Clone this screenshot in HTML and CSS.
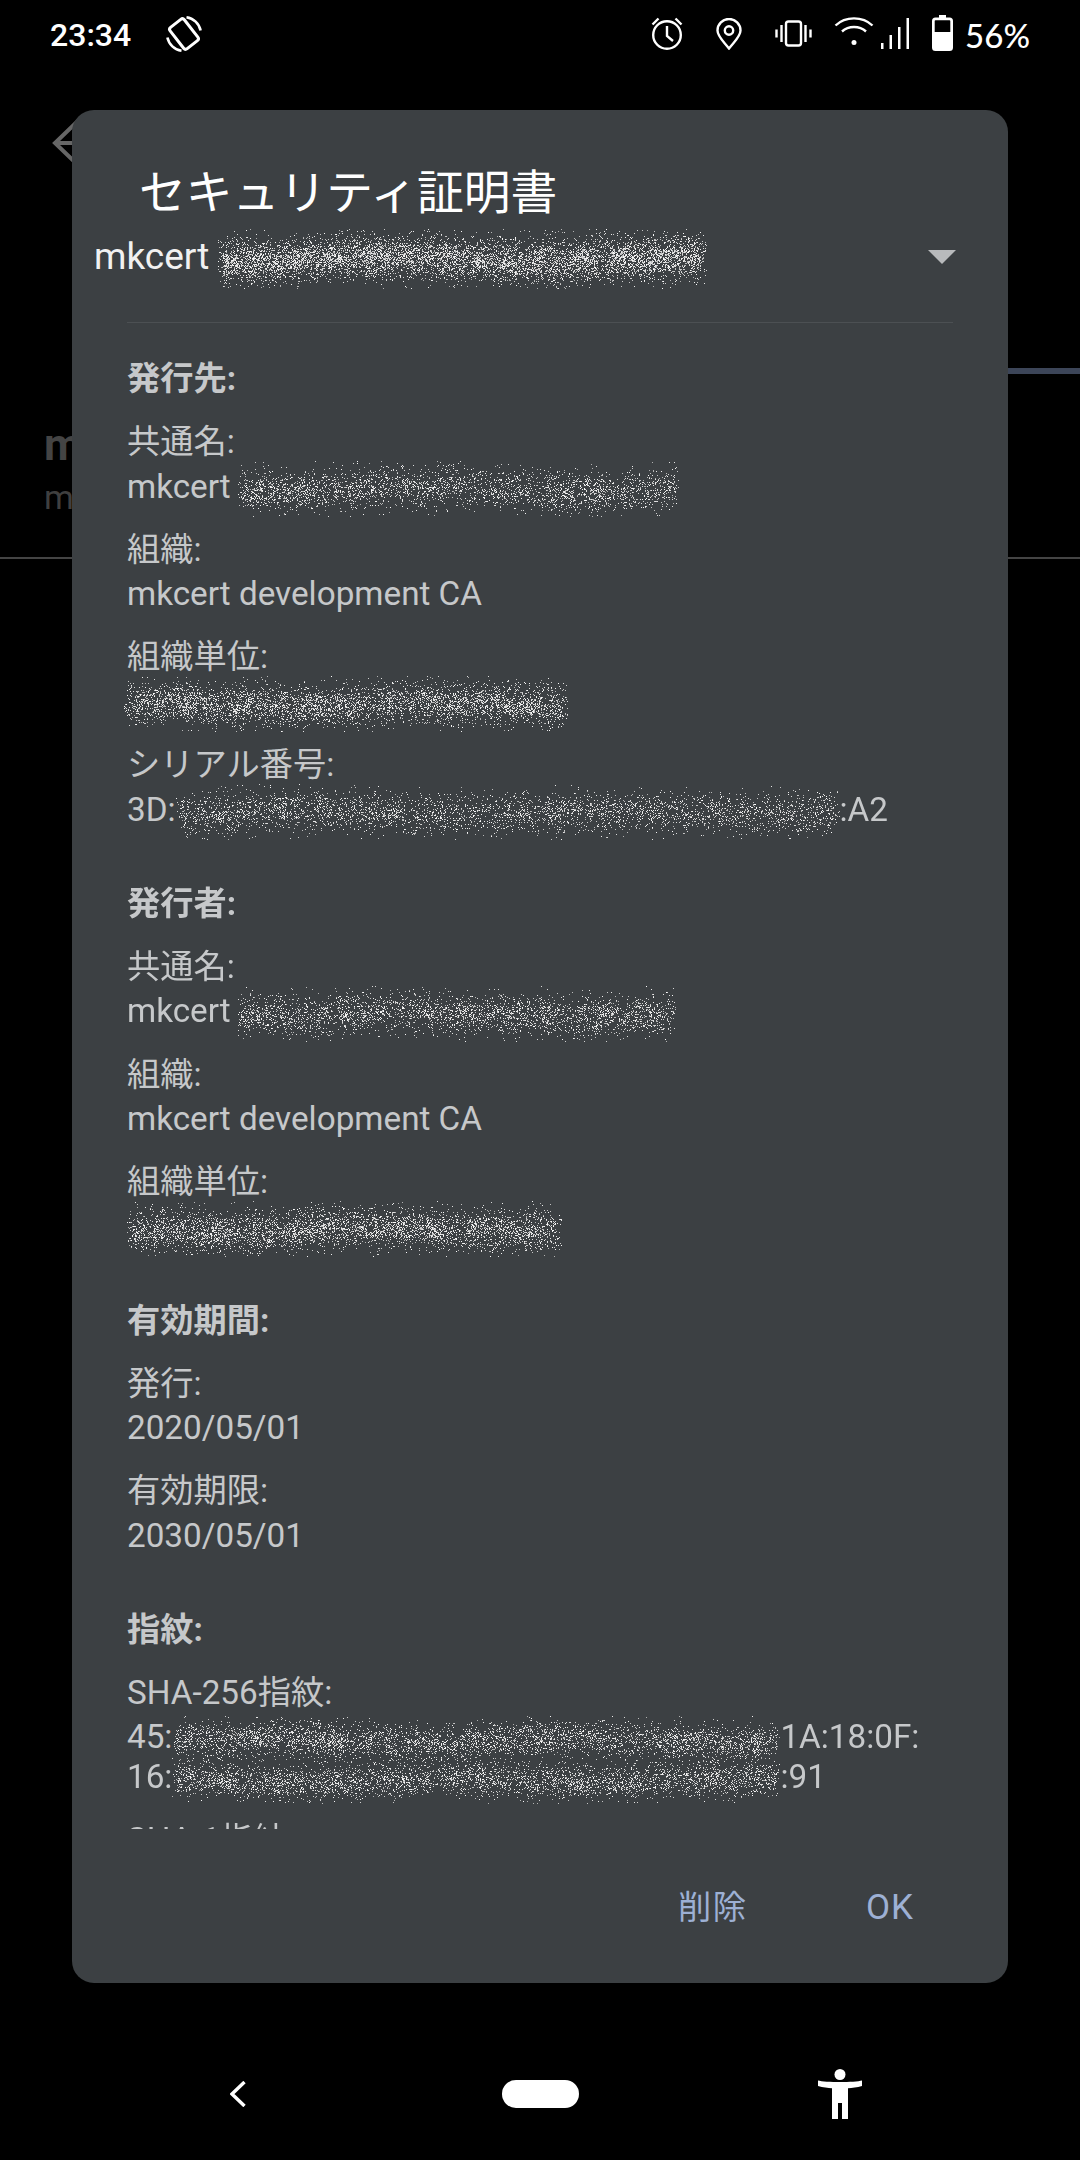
FILE: index.html
```html
<!DOCTYPE html>
<html lang="ja">
<head>
<meta charset="utf-8">
<title>セキュリティ証明書</title>
<link rel="stylesheet" href="styles.css">
</head>
<body>
<div class="screen">
  <header class="status">
    <span class="time">23:34</span>
    <svg class="ic-rotate" width="38" height="38" viewBox="0 0 38 38" fill="none" stroke="#fff" stroke-width="2.6">
      <rect x="10" y="5.5" width="18" height="27" rx="2.5" transform="rotate(-38 19 19)" stroke-width="3"/>
      <path d="M21.5 2.2A17 17 0 0 1 35.6 15.5M16.5 35.8A17 17 0 0 1 2.4 22.5"/>
    </svg>
    <span class="status-spacer"></span>
    <svg class="ic-alarm" width="32" height="34" viewBox="0 0 32 34" fill="none" stroke="#fff" stroke-width="2.4">
      <circle cx="16" cy="19" r="13.8"/>
      <path d="M16 10v10l6 5M1.5 8.5 7.500 2.500M30.500 8.500 24.500 2.500"/>
    </svg>
    <svg class="ic-pin" width="26" height="32" viewBox="0 0 26 32" fill="none" stroke="#fff" stroke-width="2.4">
      <path d="M13 30.500C8 24 1.500 18.500 1.500 12.500a11.500 11.500 0 0 1 23 0C24.500 18.500 18 24 13 30.500Z"/>
      <circle cx="13" cy="12.500" r="4.200"/>
    </svg>
    <svg class="ic-vibrate" width="37" height="27" viewBox="0 0 37 27" fill="none" stroke="#fff" stroke-width="2.400">
      <rect x="11" y="1.500" width="15" height="24" rx="2.500"/>
      <path d="M6.500 5v17M1.500 9.500v8M30.500 5v17M35.500 9.500v8"/>
    </svg>
    <svg class="ic-wifi" width="40" height="30" viewBox="0 0 40 30" fill="none" stroke="#fff" stroke-width="2.400">
      <path d="M1.500 9.500C11.500 0 28.500 0 38.500 9.500M8 15.500C14.500 9.500 25.500 9.500 32 15.500"/>
      <circle cx="20" cy="26.500" r="2.500" fill="#fff" stroke="none"/>
    </svg>
    <svg class="ic-signal" width="28" height="31" viewBox="0 0 28 31" fill="#fff">
      <rect x="0" y="25" width="2.500" height="6"/>
      <rect x="8.500" y="17" width="2.500" height="14"/>
      <rect x="17" y="9" width="2.500" height="22"/>
      <rect x="25.500" y="0" width="2.500" height="31"/>
    </svg>
    <svg class="ic-battery" width="21" height="36" viewBox="0 0 21 36" fill="#fff">
      <path d="M7 0h7v2.500h3.500A3.500 3.500 0 0 1 21 6v26.500a3.500 3.500 0 0 1-3.500 3.500h-14A3.500 3.500 0 0 1 0 32.500V6a3.500 3.500 0 0 1 3.500-3.500H7Z"/>
      <path d="M3.500 5.200h14a.8.8 0 0 1 .8.8v11H2.700V6a.8.8 0 0 1 .8-.8Z" fill="#000"/>
    </svg>
    <span class="percent">56%</span>
  </header>

  <div class="app">
    <div class="app-bar">
      <svg class="back-arrow" width="60" height="56" viewBox="0 0 60 56" fill="none" stroke="#666" stroke-width="4">
        <path d="M30 3 4 28l26 25M4 28h56"/>
      </svg>
    </div>
    <div class="tab-line"></div>
    <div class="cert-row">
      <div class="cert-name">m</div>
      <div class="cert-sub">m</div>
    </div>
  </div>

  <nav class="nav">
    <svg class="nav-back" width="16" height="26" viewBox="0 0 16 26" fill="none" stroke="#fff" stroke-width="3.400">
      <path d="M14.500 1 2 13l12.500 12"/>
    </svg>
    <span class="nav-home"></span>
    <svg class="nav-access" width="44" height="50" viewBox="0 0 44 50" fill="#fff">
      <circle cx="22" cy="5.500" r="5.500"/>
      <path d="M0 11.500C7 13.500 37 13.500 44 11.500L44 17C39 18.500 34 19 30 19.200V50H24V34H20V50H14V19.200C10 19 5 18.500 0 17Z"/>
    </svg>
  </nav>
</div>

<section class="dialog">
  <h1 class="dialog-title">セキュリティ証明書</h1>
  <div class="spinner">
    <div class="spinner-value">mkcert<canvas class="noise noise-spinner" width="489" height="60" data-density="0.5"></canvas></div>
    <svg class="spinner-arrow" width="28" height="14" viewBox="0 0 28 14" fill="#b8babc"><path d="M0 0h28L14 14Z"/></svg>
  </div>
  <div class="divider"></div>
  <div class="details">
    <div class="group">
      <h2 class="group-head">発行先:</h2>
      <dl class="field"><dt>共通名:</dt><dd>mkcert<canvas class="noise noise-after" width="441" height="56" data-density="0.28"></canvas></dd></dl>
      <dl class="field"><dt>組織:</dt><dd>mkcert development CA</dd></dl>
      <dl class="field"><dt>組織単位:</dt><dd><canvas class="noise noise-start" width="444" height="56" data-density="0.36"></canvas></dd></dl>
      <dl class="field"><dt>シリアル番号:</dt><dd>3D:<canvas class="noise" width="664" height="56" data-density="0.23"></canvas>:A2</dd></dl>
    </div>
    <div class="group">
      <h2 class="group-head">発行者:</h2>
      <dl class="field"><dt>共通名:</dt><dd>mkcert<canvas class="noise noise-after" width="439" height="56" data-density="0.28"></canvas></dd></dl>
      <dl class="field"><dt>組織:</dt><dd>mkcert development CA</dd></dl>
      <dl class="field"><dt>組織単位:</dt><dd><canvas class="noise" width="435" height="56" data-density="0.38"></canvas></dd></dl>
    </div>
    <div class="group">
      <h2 class="group-head">有効期間:</h2>
      <dl class="field"><dt>発行:</dt><dd>2020/05/01</dd></dl>
      <dl class="field"><dt>有効期限:</dt><dd>2030/05/01</dd></dl>
    </div>
    <div class="group">
      <h2 class="group-head">指紋:</h2>
      <dl class="field"><dt>SHA-256指紋:</dt><dd>45:<canvas class="noise" width="608" height="48" data-density="0.32"></canvas>1A:18:0F:<br>16:<canvas class="noise" width="608" height="48" data-density="0.32"></canvas>:91</dd></dl>
      <dl class="field"><dt>SHA-1指紋:</dt><dd></dd></dl>
    </div>
  </div>
  <div class="actions">
    <span class="action">削除</span>
    <span class="action action-ok">OK</span>
  </div>
</section>
<script src="noise.js"></script>
</body>
</html>
```

FILE: styles.css
```css
* { box-sizing: border-box; }
html, body { margin: 0; padding: 0; background: #000; }
body {
  width: 1080px;
  height: 2160px;
  overflow: hidden;
  position: relative;
  font-family: Roboto, "Noto Sans CJK JP", sans-serif;
}
.screen { height: 2160px; display: flex; flex-direction: column; }

/* status bar */
.status {
  height: 70px;
  display: flex;
  align-items: center;
  padding: 0 50px 0 50px;
  color: #fff;
}
.time { font-size: 32px; font-weight: 500; width: 115px; }
.ic-rotate { margin-top: -2px; }
.status-spacer { flex: 1; }
.ic-alarm { margin-right: 33px; margin-top: -4px; }
.ic-pin { margin-right: 33px; margin-top: -3px; }
.ic-vibrate { margin-right: 22px; margin-top: -3px; }
.ic-wifi { margin-right: 7px; margin-top: -8px; }
.ic-signal { margin-right: 23px; margin-top: -4px; }
.ic-battery { margin-right: 12px; margin-top: -5px; }
.percent { font-family: Lato, Roboto, sans-serif; font-size: 33px; font-weight: 500; margin-top: -1px; }

/* dimmed app behind the dialog */
.app { flex: 1; }
.app-bar { height: 298px; padding: 45px 0 0 51px; }
.back-arrow { display: block; }
.tab-line { height: 6px; width: 50%; margin-left: auto; background: #3c4558; }
.cert-row {
  height: 185px;
  padding: 45px 0 0 44px;
  border-bottom: 2px solid #444;
}
.cert-name { font-size: 44px; font-weight: 700; line-height: 52px; color: #444; }
.cert-sub { font-size: 34px; line-height: 52px; color: #3f3f3f; }

/* navigation bar */
.nav { height: 132px; display: flex; align-items: center; padding-left: 230px; }
.nav-back { margin-right: 256px; }
.nav-home { width: 77px; height: 28px; border-radius: 14px; background: #fff; margin-right: 239px; }

/* dialog */
.dialog {
  position: absolute;
  left: 72px;
  top: 110px;
  width: 936px;
  height: 1873px;
  background: #3c4043;
  border-radius: 22px;
  display: flex;
  flex-direction: column;
  overflow: hidden;
}
.dialog-title {
  margin: 0;
  padding: 58px 0 0 67px;
  font-size: 46.8px;
  line-height: 50px;
  font-weight: 400;
  color: #fff;
}
.spinner {
  height: 50px;
  margin-top: 14px;
  padding: 0 52px 0 22px;
  display: flex;
  align-items: center;
  justify-content: space-between;
}
.spinner-value { font-size: 37px; line-height: 50px; color: #f1f1f1; white-space: nowrap; }
.spinner-arrow { display: block; }
.divider { height: 1px; margin: 40px 55px 0; background: #4c5053; }
.details {
  height: 1506px;
  overflow: hidden;
  padding: 34px 0 0 55px;
  font-size: 33.25px;
  line-height: 40px;
  color: #c6c8ca;
}
.group { margin-bottom: 49.5px; }
.group-head { margin: 0 0 18.5px; padding: 2.25px 0; font-size: 33.25px; line-height: 40px; font-weight: 700; }
.field { margin: 0 0 18.5px; }
.group .field:last-child { margin-bottom: 0; }
.field dt { font-weight: 400; padding: 2.25px 0; }
.field dd { margin: 0; padding: 2.25px 0; white-space: nowrap; }
.noise { display: inline-block; vertical-align: middle; margin: -10px 0; }
.noise-after { margin-left: 7px; }
.noise-start { margin-left: -3px; }
.noise-spinner { margin-left: 9px; }
.actions {
  flex: 1;
  display: flex;
  justify-content: flex-end;
  gap: 118.5px;
  padding: 57px 94px 0 0;
}
.action { font-size: 33.25px; line-height: 44px; letter-spacing: 1.5px; color: #9db0d4; }
.action-ok { font-size: 35px; letter-spacing: 1px; }
```

FILE: noise.js
```js
// Scatter speckle over each redacted span: a soft-edged, clumpy cloud of light dots.
var seed = 12345;
function rnd() {
  seed = (seed * 1664525 + 1013904223) >>> 0;
  return (seed >>> 8) / 16777216;
}
document.querySelectorAll('canvas.noise').forEach(function (c) {
  var w = c.width, h = c.height, ctx = c.getContext('2d');
  var density = parseFloat(c.dataset.density);
  var img = ctx.createImageData(w, h);
  var cell = 11, cols = Math.ceil(w / cell) + 2, rows = Math.ceil(h / cell) + 2, grid = [];
  for (var n = 0; n < cols * rows; n++) grid.push(0.55 + rnd() * 0.7);
  function lump(x, y) {
    var gx = x / cell, gy = y / cell, ix = Math.floor(gx), iy = Math.floor(gy), fx = gx - ix, fy = gy - iy;
    var top = grid[iy * cols + ix] * (1 - fx) + grid[iy * cols + ix + 1] * fx;
    var bot = grid[(iy + 1) * cols + ix] * (1 - fx) + grid[(iy + 1) * cols + ix + 1] * fx;
    return top * (1 - fy) + bot * fy;
  }
  var phase = rnd() * 6;
  for (var x = 0; x < w; x++) {
    var wobble = 2.5 * Math.sin(x / 47 + phase);
    var edge = Math.min(1, Math.min(x, w - 1 - x) / 10 + 0.3);
    for (var y = 0; y < h; y++) {
      var d = (y - h / 2 - wobble) / (h * 0.27);
      var p = density * edge * lump(x, y) * Math.exp(-d * d);
      if (rnd() < p) {
        var i = (y * w + x) * 4, v = 175 + Math.floor(rnd() * 80);
        img.data[i] = img.data[i + 1] = img.data[i + 2] = v;
        img.data[i + 3] = 255;
      }
    }
  }
  ctx.putImageData(img, 0, 0);
});
```
